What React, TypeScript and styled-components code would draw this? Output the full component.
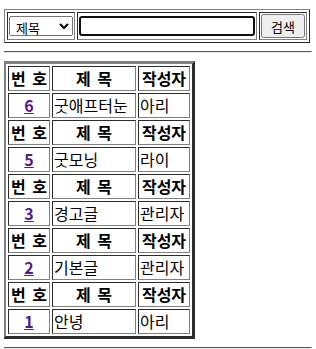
import { Fragment } from 'react'
import styled, { createGlobalStyle } from 'styled-components'

const GlobalStyle = createGlobalStyle`
  body {
    margin: 9px 4px 0 4px;
    font-family: "Noto Sans CJK KR", "Noto Sans", sans-serif;
    font-size: 16px;
    color: #000;
    background: #fff;
  }
`

const SearchTable = styled.table`
  border: 1px outset gray;
  border-spacing: 2px;
`

const SearchCell = styled.td`
  border: 1px inset gray;
  padding: 1px;
  vertical-align: middle;
`

const Select = styled.select`
  width: 64px;
  height: 20px;
  font-family: "Noto Sans CJK KR", sans-serif;
  font-size: 13px;
  padding: 0 2px;
  display: block;
`

const Input = styled.input`
  width: 176px;
  height: 20px;
  box-sizing: border-box;
  border: 2px solid #101010;
  border-radius: 3px;
  outline: none;
  display: block;
  font-size: 13px;
`

const Button = styled.button`
  width: 44px;
  height: 24px;
  font-family: "Noto Sans CJK KR", sans-serif;
  font-size: 13px;
  padding: 0;
  display: block;
`

const Rule = styled.hr`
  margin: 8px 0;
  border: 1px inset #eee;
  border-top-color: #aaa;
`

const BoardTable = styled.table`
  border: 3px outset gray;
  border-spacing: 2px;
  margin-left: -1px;
  line-height: 21px;
`

const Head = styled.th<{ $w?: number }>`
  border: 1px inset gray;
  padding: 1px;
  font-weight: bold;
  text-align: center;
  white-space: pre;
  word-spacing: 3px;
  width: ${p => (p.$w ? `${p.$w}px` : 'auto')};
`

const Cell = styled.td<{ $center?: boolean }>`
  border: 1px inset gray;
  padding: 1px;
  text-align: ${p => (p.$center ? 'center' : 'left')};
  white-space: nowrap;
`

const NumLink = styled.a`
  color: #551a8b;
  font-weight: bold;
  text-decoration: underline;
`

const posts = [
  { no: 6, title: '굿애프터눈', writer: '아리' },
  { no: 5, title: '굿모닝', writer: '라이' },
  { no: 3, title: '경고글', writer: '관리자' },
  { no: 2, title: '기본글', writer: '관리자' },
  { no: 1, title: '안녕', writer: '아리' },
]

export default function App() {
  return (
    <>
      <GlobalStyle />
      <form onSubmit={e => e.preventDefault()}>
        <SearchTable>
          <tbody>
            <tr>
              <SearchCell>
                <Select defaultValue="title">
                  <option value="title">제목</option>
                  <option value="writer">작성자</option>
                </Select>
              </SearchCell>
              <SearchCell>
                <Input type="text" />
              </SearchCell>
              <SearchCell>
                <Button type="submit">검색</Button>
              </SearchCell>
            </tr>
          </tbody>
        </SearchTable>
      </form>
      <Rule />
      <BoardTable>
        <tbody>
          {posts.map(post => (
            <Fragment key={post.no}>
              <tr>
                <Head $w={38}>번 호</Head>
                <Head $w={80}>제 목</Head>
                <Head $w={48}>작성자</Head>
              </tr>
              <tr>
                <Cell $center>
                  <NumLink href="#">{post.no}</NumLink>
                </Cell>
                <Cell>{post.title}</Cell>
                <Cell>{post.writer}</Cell>
              </tr>
            </Fragment>
          ))}
        </tbody>
      </BoardTable>
      <Rule />
    </>
  )
}
